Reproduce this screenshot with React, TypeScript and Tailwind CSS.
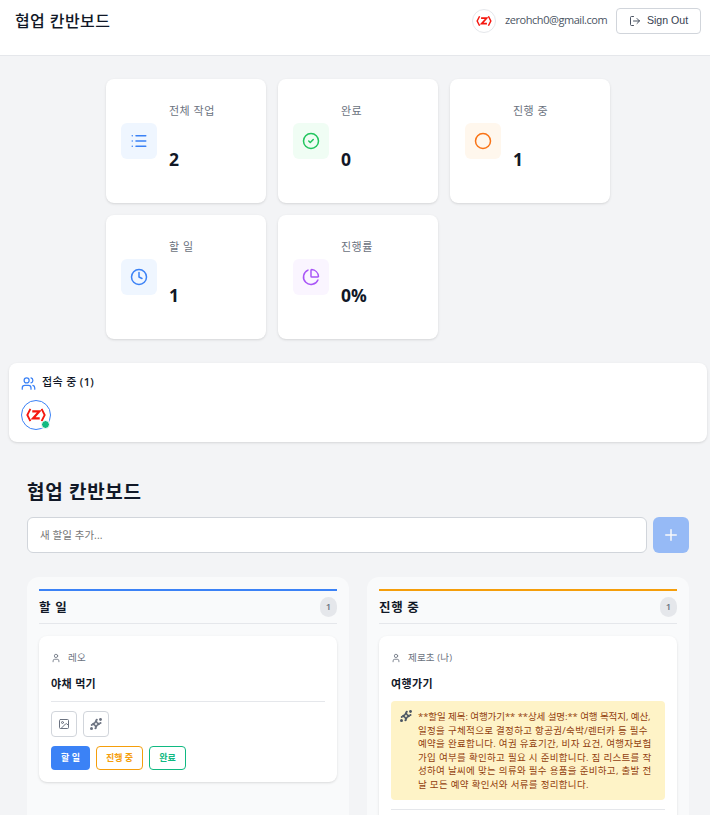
import type { ReactNode } from "react";
import clsx from "clsx";
import {
  ChartPie,
  Circle,
  CircleCheck,
  Clock,
  Image as ImageIcon,
  List,
  LogOut,
  Plus,
  User,
  Users,
} from "lucide-react";

const stats = [
  { label: "전체 작업", value: "2", icon: <List size={18} />, color: "bg-[#eff6ff] text-[#3b82f6]" },
  { label: "완료", value: "0", icon: <CircleCheck size={18} />, color: "bg-[#f0fdf4] text-[#22c55e]" },
  { label: "진행 중", value: "1", icon: <Circle size={18} />, color: "bg-[#fff7ed] text-[#f97316]" },
  { label: "할 일", value: "1", icon: <Clock size={18} />, color: "bg-[#eff6ff] text-[#3b82f6]" },
  { label: "진행률", value: "0%", icon: <ChartPie size={18} />, color: "bg-[#faf5ff] text-[#a855f7]" },
];

const aiLines = [
  "**할일 제목: 여행가기** **상세 설명:** 여행 목적지, 예산,",
  "일정을 구체적으로 결정하고 항공권/숙박/렌터카 등 필수",
  "예약을 완료합니다. 여권 유효기간, 비자 요건, 여행자보험",
  "가입 여부를 확인하고 필요 시 준비합니다. 짐 리스트를 작",
  "성하여 날씨에 맞는 의류와 필수 용품을 준비하고, 출발 전",
  "날 모든 예약 확인서와 서류를 정리합니다.",
];

function Logo({ size }: { size: number }) {
  return (
    <svg width={size} height={size} viewBox="0 0 30 30" fill="none" stroke="#f5170f">
      <path d="M9 8.5L5.7 15L9 21.5M21 8.5L24.3 15L21 21.5" strokeWidth="2" />
      <path d="M11 11.2H18.5L11.8 18.7H19" strokeWidth="2.4" />
    </svg>
  );
}

function Sparkle({ size, className }: { size: number; className?: string }) {
  return (
    <svg
      width={size}
      height={size}
      viewBox="0 0 24 24"
      fill="none"
      stroke="currentColor"
      strokeWidth="2.6"
      strokeLinejoin="round"
      className={clsx("shrink-0", className)}
    >
      <path d="M12 5C12.8 9 15 11.2 19 12C15 12.8 12.8 15 12 19C11.2 15 9 12.8 5 12C9 11.2 11.2 9 12 5Z" />
      <g fill="currentColor" stroke="none">
        <circle cx="21" cy="3" r="2.8" />
        <circle cx="13.5" cy="3.5" r="2.2" />
        <circle cx="20.8" cy="10" r="2.2" />
        <circle cx="3" cy="21" r="3" />
        <circle cx="3.5" cy="14" r="2" />
        <circle cx="11" cy="20.5" r="2.2" />
      </g>
    </svg>
  );
}

function Column({ title, bar, children }: { title: string; bar: string; children: ReactNode }) {
  return (
    <section className="h-[260px] rounded-xl bg-[#f9fafb] p-3">
      <div className={clsx("flex h-[35px] items-center justify-between border-t-2 border-b border-b-[#e5e7eb]", bar)}>
        <h3 className="pt-[2px] text-[12.5px] font-semibold tracking-[0.7px] text-[#111827]">{title}</h3>
        <span className="flex h-5 w-[17px] items-center justify-center rounded-full bg-[#e5e7eb] text-[9.5px] font-semibold text-[#6b7280]">
          1
        </span>
      </div>
      {children}
    </section>
  );
}

function CardHead({ user, title }: { user: string; title: string }) {
  return (
    <>
      <div className="flex h-[19px] items-center gap-[7px] text-[9.5px] tracking-[0.15px] text-[#6b7280]">
        <User size={10} />
        <span className="pt-px">{user}</span>
      </div>
      <h4 className="mt-[7px] h-5 text-[11px] leading-[19px] font-semibold tracking-[0.35px] text-[#111827]">{title}</h4>
    </>
  );
}

export default function App() {
  return (
    <div className="h-[815px] overflow-hidden bg-[#f3f4f6] font-['Open_Sans','Noto_Sans_CJK_KR',sans-serif]">
      <header className="flex h-14 items-start justify-between border-b border-[#e5e7eb] bg-white pt-2 pr-[9px] pl-[15px]">
        <h1 className="text-[16px] leading-[26px] font-medium tracking-[0.4px] text-[#111827]">협업 칸반보드</h1>
        <div className="flex h-[26px] items-center">
          <span className="flex size-6 items-center justify-center rounded-full border border-[#e5e7eb]">
            <Logo size={26} />
          </span>
          <span className="ml-[9px] w-[103px] pb-px text-[11px] tracking-[-0.44px] whitespace-nowrap text-[#4b5563]">
            zerohch0@gmail.com
          </span>
          <button className="ml-2 flex h-[26px] w-[85px] items-center justify-center gap-[6px] rounded border border-[#d1d5db] font-['Liberation_Sans',sans-serif] text-[10.6px] text-[#374151]">
            <LogOut size={12} strokeWidth={1.8} />
            Sign Out
          </button>
        </div>
      </header>

      <main className="pt-[23px] pr-[3px] pl-[9px]">
        <div className="mx-auto grid w-[504px] grid-cols-3 gap-3">
          {stats.map((stat) => (
            <div key={stat.label} className="flex h-[124px] items-center gap-3 rounded-lg bg-white px-[15px] shadow-sm">
              <div className={clsx("flex size-9 items-center justify-center rounded-md", stat.color)}>{stat.icon}</div>
              <div className="h-[78px]">
                <p className="text-[11px] leading-[18px] tracking-[0.5px] text-[#6b7280]">{stat.label}</p>
                <p className="mt-[23px] text-[17.5px] leading-[32px] font-bold text-[#111827]">{stat.value}</p>
              </div>
            </div>
          ))}
        </div>

        <div className="mt-6 h-[79px] rounded-lg bg-white px-3 pt-[11px] shadow-sm">
          <div className="flex h-[18px] items-center gap-[6px] text-[11px] font-medium tracking-[0.35px] text-[#111827]">
            <Users size={15} className="text-[#3b82f6]" />
            <span className="pb-px">
              접속 중 <span className="font-semibold">(1)</span>
            </span>
          </div>
          <div className="relative mt-2 flex size-[30px] items-center justify-center rounded-full border border-[#3b82f6]">
            <Logo size={30} />
            <span className="absolute right-0 bottom-0 size-[9px] rounded-full border border-white bg-[#10b981]" />
          </div>
        </div>

        <div className="px-[18px] pt-9">
          <h2 className="h-[27px] text-[19px] leading-7 font-bold tracking-[0.7px] text-[#111827]">협업 칸반보드</h2>
          <div className="mt-3 flex gap-1.5">
            <input
              className="h-9 w-[620px] rounded-md border border-[#d1d5db] bg-white px-3 text-[10.5px] tracking-[0.05px] placeholder:text-[#757575]"
              placeholder="새 할일 추가..."
            />
            <button className="flex size-9 items-center justify-center rounded-md bg-[#3b82f6] text-white opacity-50">
              <Plus size={18} />
            </button>
          </div>

          <div className="mt-6 grid w-[662px] grid-cols-2 gap-[18px]">
            <Column title="할 일" bar="border-t-[#3b82f6]">
              <div className="mt-3 h-[146px] rounded-lg bg-white px-3 pt-3 shadow-sm">
                <CardHead user="레오" title="야채 먹기" />
                <div className="mt-[7px] border-t border-[#e5e7eb] pt-[9px]">
                  <div className="flex gap-1.5 text-[#6b7280]">
                    <button className="flex size-[26px] items-center justify-center rounded border border-[#d1d5db]">
                      <ImageIcon size={12} />
                    </button>
                    <button className="flex size-[26px] items-center justify-center rounded border border-[#d1d5db]">
                      <Sparkle size={12} />
                    </button>
                  </div>
                  <div className="mt-[9px] flex gap-1.5 text-[9px] font-semibold">
                    <button className="h-6 w-[39px] rounded bg-[#3b82f6] text-white">할 일</button>
                    <button className="h-6 w-[47px] rounded border border-[#f59e0b] text-[#f59e0b]">진행 중</button>
                    <button className="h-6 w-[37px] rounded border border-[#10b981] text-[#10b981]">완료</button>
                  </div>
                </div>
              </div>
            </Column>

            <Column title="진행 중" bar="border-t-[#f59e0b]">
              <div className="mt-3 h-[200px] rounded-lg bg-white px-3 pt-3 shadow-sm">
                <CardHead user="제로초 (나)" title="여행가기" />
                <div className="mt-[7px] flex h-[99px] gap-[6px] rounded bg-[#fef3c7] px-[9px] pt-[9px] text-[#92400e]">
                  <Sparkle size={12} className="text-[#4b5563]" />
                  <div className="text-[9.5px] leading-[13.6px] whitespace-nowrap">
                    {aiLines.map((line, i) => (
                      <p key={line} className={i === 0 ? "tracking-[-0.07px]" : "tracking-[0.32px]"}>
                        {line}
                      </p>
                    ))}
                  </div>
                </div>
                <div className="mt-[9px] border-t border-[#e5e7eb]" />
              </div>
            </Column>
          </div>
        </div>
      </main>
    </div>
  );
}
